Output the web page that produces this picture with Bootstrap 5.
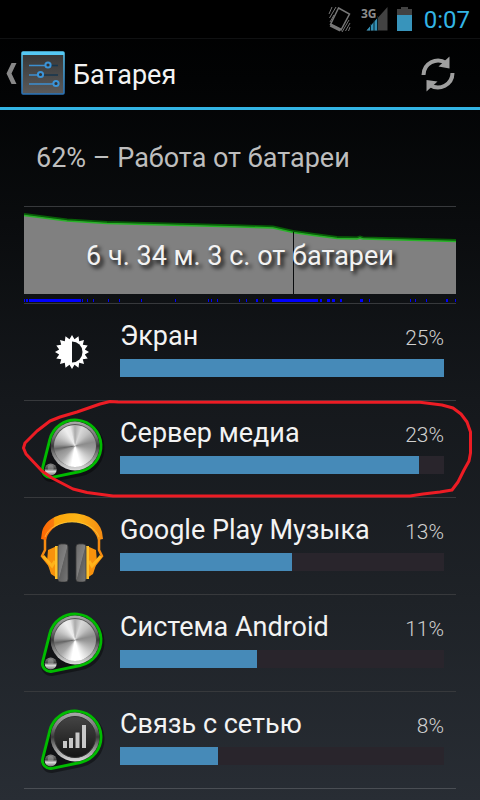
<!DOCTYPE html>
<html lang="ru">
<head>
<meta charset="utf-8">
<meta name="viewport" content="width=device-width, initial-scale=1">
<title>Батарея</title>
<link href="https://cdn.jsdelivr.net/npm/bootstrap@5.3.0/dist/css/bootstrap.min.css" rel="stylesheet">
<style>
  body {
    min-height: 100vh;
    font-family: Roboto, "Noto Sans", sans-serif;
    color: #f3f3f3;
    background: #272d33 linear-gradient(#000 0, #020304 10%, #0a0c0e 28%, #15181c 50%, #1e2227 75%, #282d34 100%);
  }
  svg { display: block; }
  .status-bar { height: 38px; padding-right: 10px; background: #000; }
  .clock { width: 49px; padding-top: 3px; font-size: 24px; line-height: 35px; color: #33b5e5; white-space: nowrap; }
  .action-bar { height: 72px; border-top: 1px solid #101112; border-bottom: 3px solid #33b5e5; }
  .up-link { color: #f3f3f3; }
  .page-title { padding-top: 3px; font-size: 27px; line-height: 32px; }
  .refresh { width: 84px; }
  .content { padding: 0 24px 11px; }
  .summary { height: 96px; padding-left: 12px; font-size: 27px; color: #bebebe; }
  .history, .usage { height: 97px; border-top: 1px solid #37393c; }
  .chart-caption { font-size: 27px; line-height: 32px; margin-top: 33px; text-shadow: 3px 3px 4px #000; }
  .usage { padding: 0 12px; }
  .usage:last-child { height: 98px; border-bottom: 1px solid #4a4e54; }
  .usage-icon { width: 72px; height: 72px; }
  .usage-body { padding: 16px 0 0 12px; }
  .usage-name { font-size: 27px; line-height: 32px; }
  .usage-share { font-size: 21px; line-height: 28px; font-weight: 300; color: #cfcfcf; }
  .usage .progress { height: 18px; margin-top: 7px; border-radius: 0; background: #29252c; }
  .usage .progress-bar { background: #468ab8; }
  .metal {
    width: 42px; height: 42px; border-radius: 50%;
    background: conic-gradient(#aaa 0deg, #d8d8d8 20deg, #c0c0c0 45deg, #8c8c8c 78deg, #999 95deg, #bbb 120deg, #fff 165deg, #fff 190deg, #aaa 225deg, #909090 250deg, #656565 262deg, #999 275deg, #c5c5c5 300deg, #eee 330deg, #e8e8e8 345deg, #aaa 360deg);
  }
  .marker-ring { top: -2px; left: -24px; right: -24px; width: calc(100% + 48px); height: 100px; pointer-events: none; }
</style>
<script src="https://cdn.jsdelivr.net/npm/bootstrap@5.3.0/dist/js/bootstrap.bundle.min.js" defer></script>
</head>
<body>

<svg width="0" height="0" class="position-absolute" aria-hidden="true">
  <defs>
    <linearGradient id="rim" x1="0" y1="0" x2="0" y2="1"><stop offset="0" stop-color="#aaa"/><stop offset=".3" stop-color="#777"/><stop offset=".5" stop-color="#3a3a3a"/><stop offset=".65" stop-color="#777"/><stop offset="1" stop-color="#ddd"/></linearGradient>
    <linearGradient id="knob" x1="0" y1="0" x2="0" y2="1"><stop offset="0" stop-color="#888"/><stop offset=".45" stop-color="#444"/><stop offset=".65" stop-color="#ddd"/><stop offset="1" stop-color="#777"/></linearGradient>
    <linearGradient id="face" x1="0" y1="0" x2="0" y2="1"><stop offset="0" stop-color="#444"/><stop offset="1" stop-color="#151515"/></linearGradient>
    <linearGradient id="tile" x1="0" y1="0" x2="0" y2="1"><stop offset="0" stop-color="#353535"/><stop offset="1" stop-color="#5a5a5a"/></linearGradient>
    <linearGradient id="tileEdge" x1="0" y1="0" x2="0" y2="1"><stop offset="0" stop-color="#5ccbf5"/><stop offset="1" stop-color="#2872b8"/></linearGradient>
    <linearGradient id="band" x1="0" y1="0" x2="1" y2="0"><stop offset="0" stop-color="#f60"/><stop offset=".2" stop-color="#f87a10"/><stop offset=".22" stop-color="#fda50c"/><stop offset=".6" stop-color="#fcb415"/><stop offset="1" stop-color="#f58a12"/></linearGradient>
    <linearGradient id="pad" x1="0" y1="0" x2="1" y2="1"><stop offset="0" stop-color="#6a6a6a"/><stop offset=".48" stop-color="#808080"/><stop offset=".52" stop-color="#606060"/><stop offset="1" stop-color="#777"/></linearGradient>
    <g id="belt">
      <path d="M13.8 26.6A26 26 0 1 1 44.3 58.5L16.1 64.3A8 8 0 0 1 6.7 54.5Z" fill="none" stroke="#000" stroke-opacity=".4" stroke-width="5" transform="translate(1 2)"/>
      <path d="M13.8 26.6A26 26 0 1 1 44.3 58.5L16.1 64.3A8 8 0 0 1 6.7 54.5Z" fill="#101114" stroke="#0b0" stroke-width="2.9"/>
      <circle cx="39" cy="33" r="24.4" fill="url(#rim)"/>
      <circle cx="14.7" cy="56.4" r="6" fill="url(#knob)"/>
      <circle cx="14.7" cy="55" r="3" fill="#aaa" fill-opacity=".5"/>
    </g>
  </defs>
</svg>

<div class="status-bar d-flex align-items-center justify-content-end">
  <svg width="24" height="28" viewBox="0 0 24 28" fill="none" stroke="#777" role="img" aria-label="Вибрация">
    <path d="M10.500 3L21.500 9L13 25L2.500 19.500Z" stroke-width="1.500"/>
    <path d="M2.500 20L12.500 25" stroke-width="3.500"/>
    <path d="M1 9L4 2M1.500 13L8 2M2 17L6 10M14 27L21 15M17.500 26L22 18M20.500 26L22 22" stroke-width="1"/>
  </svg>
  <svg class="ms-2" width="28" height="26" viewBox="0 0 28 26" role="img" aria-label="Сигнал 3G">
    <path d="M27.500 1V24.500H6.500Z" fill="#424242"/>
    <path d="M17 12.500V24.500H6.500Z" fill="#3490b5"/>
    <path d="M10.500 18V25M14 14V25M17.500 10V25" stroke="#05202a"/>
    <text x="1" y="12" font-family="Open Sans, sans-serif" font-weight="700" font-size="12" fill="#8c8c8c">3G</text>
  </svg>
  <svg class="ms-2" width="17" height="26" viewBox="0 0 17 26" role="img" aria-label="Заряд 62%">
    <path d="M5 1H12V3H16V9H1V3H5Z" fill="#424242"/><path d="M1 9H16V25H1Z" fill="#3894bb"/>
  </svg>
  <span class="clock ms-2 text-end">0:07</span>
</div>

<header class="action-bar d-flex align-items-center justify-content-between">
  <a href="#" class="up-link d-flex align-items-center text-decoration-none">
    <svg width="21" height="44" viewBox="0 0 21 44" aria-hidden="true"><path d="M11.500 12H16.500L11.500 22.500L16.500 33H11.500L6.500 22.500Z" fill="#888"/></svg>
    <svg width="44" height="44" viewBox="0 0 44 44" aria-hidden="true">
      <rect x="1" y="1" width="42" height="42" rx="1" fill="url(#tile)" stroke="url(#tileEdge)" stroke-width="1.500"/>
      <path d="M1 1H43V4H1Z" fill="#55c8f4"/>
      <path d="M29 14.500H37M22 24H37" stroke="#16364e" stroke-width="1.300"/>
      <path d="M8 14.500H24M8 24H17M8 33H32" stroke="#3c8fd0" stroke-width="1.500"/>
      <g fill="#333" stroke="#3b94d8" stroke-width="2"><circle cx="27" cy="14" r="2.600"/><circle cx="19.500" cy="23.500" r="2.600"/><circle cx="35" cy="32.500" r="2.600"/></g>
    </svg>
    <h1 class="page-title fw-normal mb-0 ms-2">Батарея</h1>
  </a>
  <button type="button" class="refresh btn border-0 p-0 d-flex justify-content-center" aria-label="Обновить">
    <svg width="36" height="38" viewBox="0 0 36 38" fill="none" stroke="#9f9f9f" stroke-width="4">
      <path d="M3.500 21A14.500 14.500 0 0 1 26 9"/><path d="M32.500 19A14.500 14.500 0 0 1 10 31"/>
      <path d="M29.500 2.500V14.500L18.500 12.500Z" fill="#9f9f9f" stroke="none"/><path d="M6.500 37.500V26L17.500 27.500Z" fill="#9f9f9f" stroke="none"/>
    </svg>
  </button>
</header>

<main class="content">
  <div class="summary d-flex align-items-center">62% – Работа от батареи</div>

  <section class="history position-relative">
    <svg class="position-absolute top-0 start-0 w-100" height="96" viewBox="0 0 432 96" preserveAspectRatio="none" aria-hidden="true">
      <path d="M0 8L43 13.500L83 16L216 19.500L249 20.500L269 25L290 28L313 31L333 31L336 30L339 31L396 33L432 34V87H0Z" fill="#808080"/>
      <path d="M0 7L43 12.500L83 15L216 18.500L249 19.500L269 24L290 27L313 30L333 30.500L336 29.500L339 30.500L396 32L432 33" fill="none" stroke="#075e07" stroke-width="2"/>
      <path d="M0 8.500L43 14L83 16.500L216 20L249 21L269 25.500L290 28.500L313 31.500L333 32L336 31L339 32L396 33.500L432 34.500" fill="none" stroke="#27b227" stroke-width="1.600"/>
      <path d="M269.500 25V87" stroke="#090b0d"/>
      <path d="M0 92h1v3H0zM2 92h2v3H2zM5 92h52v3H5zM58 92h1v3h-1zM63 92h1v3h-1zM69 92h1v3h-1zM84 92h1v3h-1zM95 92h1v3h-1zM117 92h1v3h-1zM151 92h1v3h-1zM184 92h1v3h-1zM187 92h1v3h-1zM193 92h1v3h-1zM215 92h1v3h-1zM222 92h1v3h-1zM232 92h2v3h-2zM239 92h1v3h-1zM248 92h46v3h-46zM296 92h2v3h-2zM303 92h3v3h-3zM308 92h3v3h-3zM316 92h2v3h-2zM336 92h3v3h-3zM345 92h1v3h-1zM386 92h1v3h-1zM391 92h1v3h-1zM402 92h1v3h-1zM422 92h2v3h-2zM431 92h1v3h-1z" fill="#00f"/>
    </svg>
    <p class="chart-caption position-relative text-center mb-0">6 ч. 34 м. 3 с. от батареи</p>
  </section>

  <ul class="list-unstyled mb-0">
    <li class="usage d-flex">
      <svg class="usage-icon flex-shrink-0 align-self-center" viewBox="0 0 72 72" aria-hidden="true">
        <path id="sun" fill="#fff" d=""/>
        <path d="M36 25.500A10.500 10.500 0 0 1 36 46.500Z" fill="#14171a"/>
      </svg>
      <div class="usage-body flex-grow-1">
        <div class="d-flex justify-content-between align-items-end"><span class="usage-name">Экран</span><span class="usage-share">25%</span></div>
        <div class="progress" role="progressbar" aria-label="Экран" aria-valuenow="100" aria-valuemin="0" aria-valuemax="100"><div class="progress-bar" style="width:100%"></div></div>
      </div>
    </li>
    <li class="usage d-flex position-relative">
      <svg class="usage-icon flex-shrink-0 align-self-center" viewBox="0 0 72 72" aria-hidden="true">
        <use href="#belt"/><circle cx="39" cy="32.500" r="21.500" fill="#555"/>
        <foreignObject x="18" y="12" width="42" height="42"><div class="metal"></div></foreignObject>
      </svg>
      <div class="usage-body flex-grow-1">
        <div class="d-flex justify-content-between align-items-end"><span class="usage-name">Сервер медиа</span><span class="usage-share">23%</span></div>
        <div class="progress" role="progressbar" aria-label="Сервер медиа" aria-valuenow="92" aria-valuemin="0" aria-valuemax="100"><div class="progress-bar" style="width:92.300%"></div></div>
      </div>
      <svg class="marker-ring position-absolute" viewBox="0 399 480 100" preserveAspectRatio="none" aria-hidden="true">
        <path d="M118 402L110 401.500L100 404L77 412L60 417L50 421L37 431L25 443L23.500 448L26 454L42 471L52 478L73 489L87 492.500L113 496H410L423 494L440 492L452 490L458 482L464 470L469 461L470.500 453V432L467 422L461 414L453 408L442 405L420 402.300Z" fill="none" stroke="#ed1c24" stroke-width="3" stroke-linejoin="round" vector-effect="non-scaling-stroke"/>
      </svg>
    </li>
    <li class="usage d-flex">
      <svg class="usage-icon flex-shrink-0 align-self-center" viewBox="0 0 72 72" aria-hidden="true">
        <path d="M9 28V40L6 46L14 56M63 28V40L66 46L58 56" fill="none" stroke="#f58a10" stroke-width="2.500"/>
        <path d="M5 29L6 22C12 -3 60 -3 66 22L67 29L62 30C56 6 16 6 10 30Z" fill="url(#band)"/>
        <path d="M9 27C16 7 56 7 63 27" fill="none" stroke="#ffd24a" stroke-width="1" stroke-opacity=".6"/>
        <path d="M21 36L12 40L11 52L15 64L21 68ZM51 36L60 40L61 52L57 64L51 68Z" fill="#f8920c"/>
        <path d="M7 46L16 56L19 51M65 46L56 56L53 51" fill="none" stroke="#ffb31a" stroke-width="3"/>
        <rect x="19" y="36" width="3" height="33" fill="#ffc02a"/><rect x="50" y="36" width="3" height="33" fill="#ffc02a"/>
        <rect x="22" y="34" width="10" height="38" rx="3" fill="url(#pad)" stroke="#3e3e3e" stroke-width=".8"/>
        <rect x="40" y="34" width="10" height="38" rx="3" fill="url(#pad)" stroke="#3e3e3e" stroke-width=".8"/>
      </svg>
      <div class="usage-body flex-grow-1">
        <div class="d-flex justify-content-between align-items-end"><span class="usage-name">Google Play Музыка</span><span class="usage-share">13%</span></div>
        <div class="progress" role="progressbar" aria-label="Google Play Музыка" aria-valuenow="53" aria-valuemin="0" aria-valuemax="100"><div class="progress-bar" style="width:53%"></div></div>
      </div>
    </li>
    <li class="usage d-flex">
      <svg class="usage-icon flex-shrink-0 align-self-center" viewBox="0 0 72 72" aria-hidden="true">
        <use href="#belt"/><circle cx="39" cy="32.500" r="21.500" fill="#555"/>
        <foreignObject x="18" y="12" width="42" height="42"><div class="metal"></div></foreignObject>
      </svg>
      <div class="usage-body flex-grow-1">
        <div class="d-flex justify-content-between align-items-end"><span class="usage-name">Система Android</span><span class="usage-share">11%</span></div>
        <div class="progress" role="progressbar" aria-label="Система Android" aria-valuenow="42" aria-valuemin="0" aria-valuemax="100"><div class="progress-bar" style="width:42.300%"></div></div>
      </div>
    </li>
    <li class="usage d-flex">
      <svg class="usage-icon flex-shrink-0 align-self-center" viewBox="0 0 72 72" aria-hidden="true">
        <use href="#belt"/><circle cx="39" cy="33" r="20.500" fill="url(#face)" stroke="#333"/>
        <path d="M27 37h4v7h-4zM33 34h4v10h-4zM39.500 28.500h4V44h-4zM46 21h4v23h-4z" fill="#c8c8c8"/>
      </svg>
      <div class="usage-body flex-grow-1">
        <div class="d-flex justify-content-between align-items-end"><span class="usage-name">Связь с сетью</span><span class="usage-share">8%</span></div>
        <div class="progress" role="progressbar" aria-label="Связь с сетью" aria-valuenow="30" aria-valuemin="0" aria-valuemax="100"><div class="progress-bar" style="width:30.300%"></div></div>
      </div>
    </li>
  </ul>
</main>

<script>
  // Sixteen-pointed sun outline for the screen brightness icon
  const points = [];
  for (let i = 0; i < 32; i++) {
    const r = i % 2 ? 13 : 17;
    const a = i * Math.PI / 16 - Math.PI / 2;
    points.push((36 + r * Math.cos(a)).toFixed(1) + ' ' + (36 + r * Math.sin(a)).toFixed(1));
  }
  document.getElementById('sun').setAttribute('d', 'M' + points.join('L') + 'Z');
</script>
</body>
</html>
